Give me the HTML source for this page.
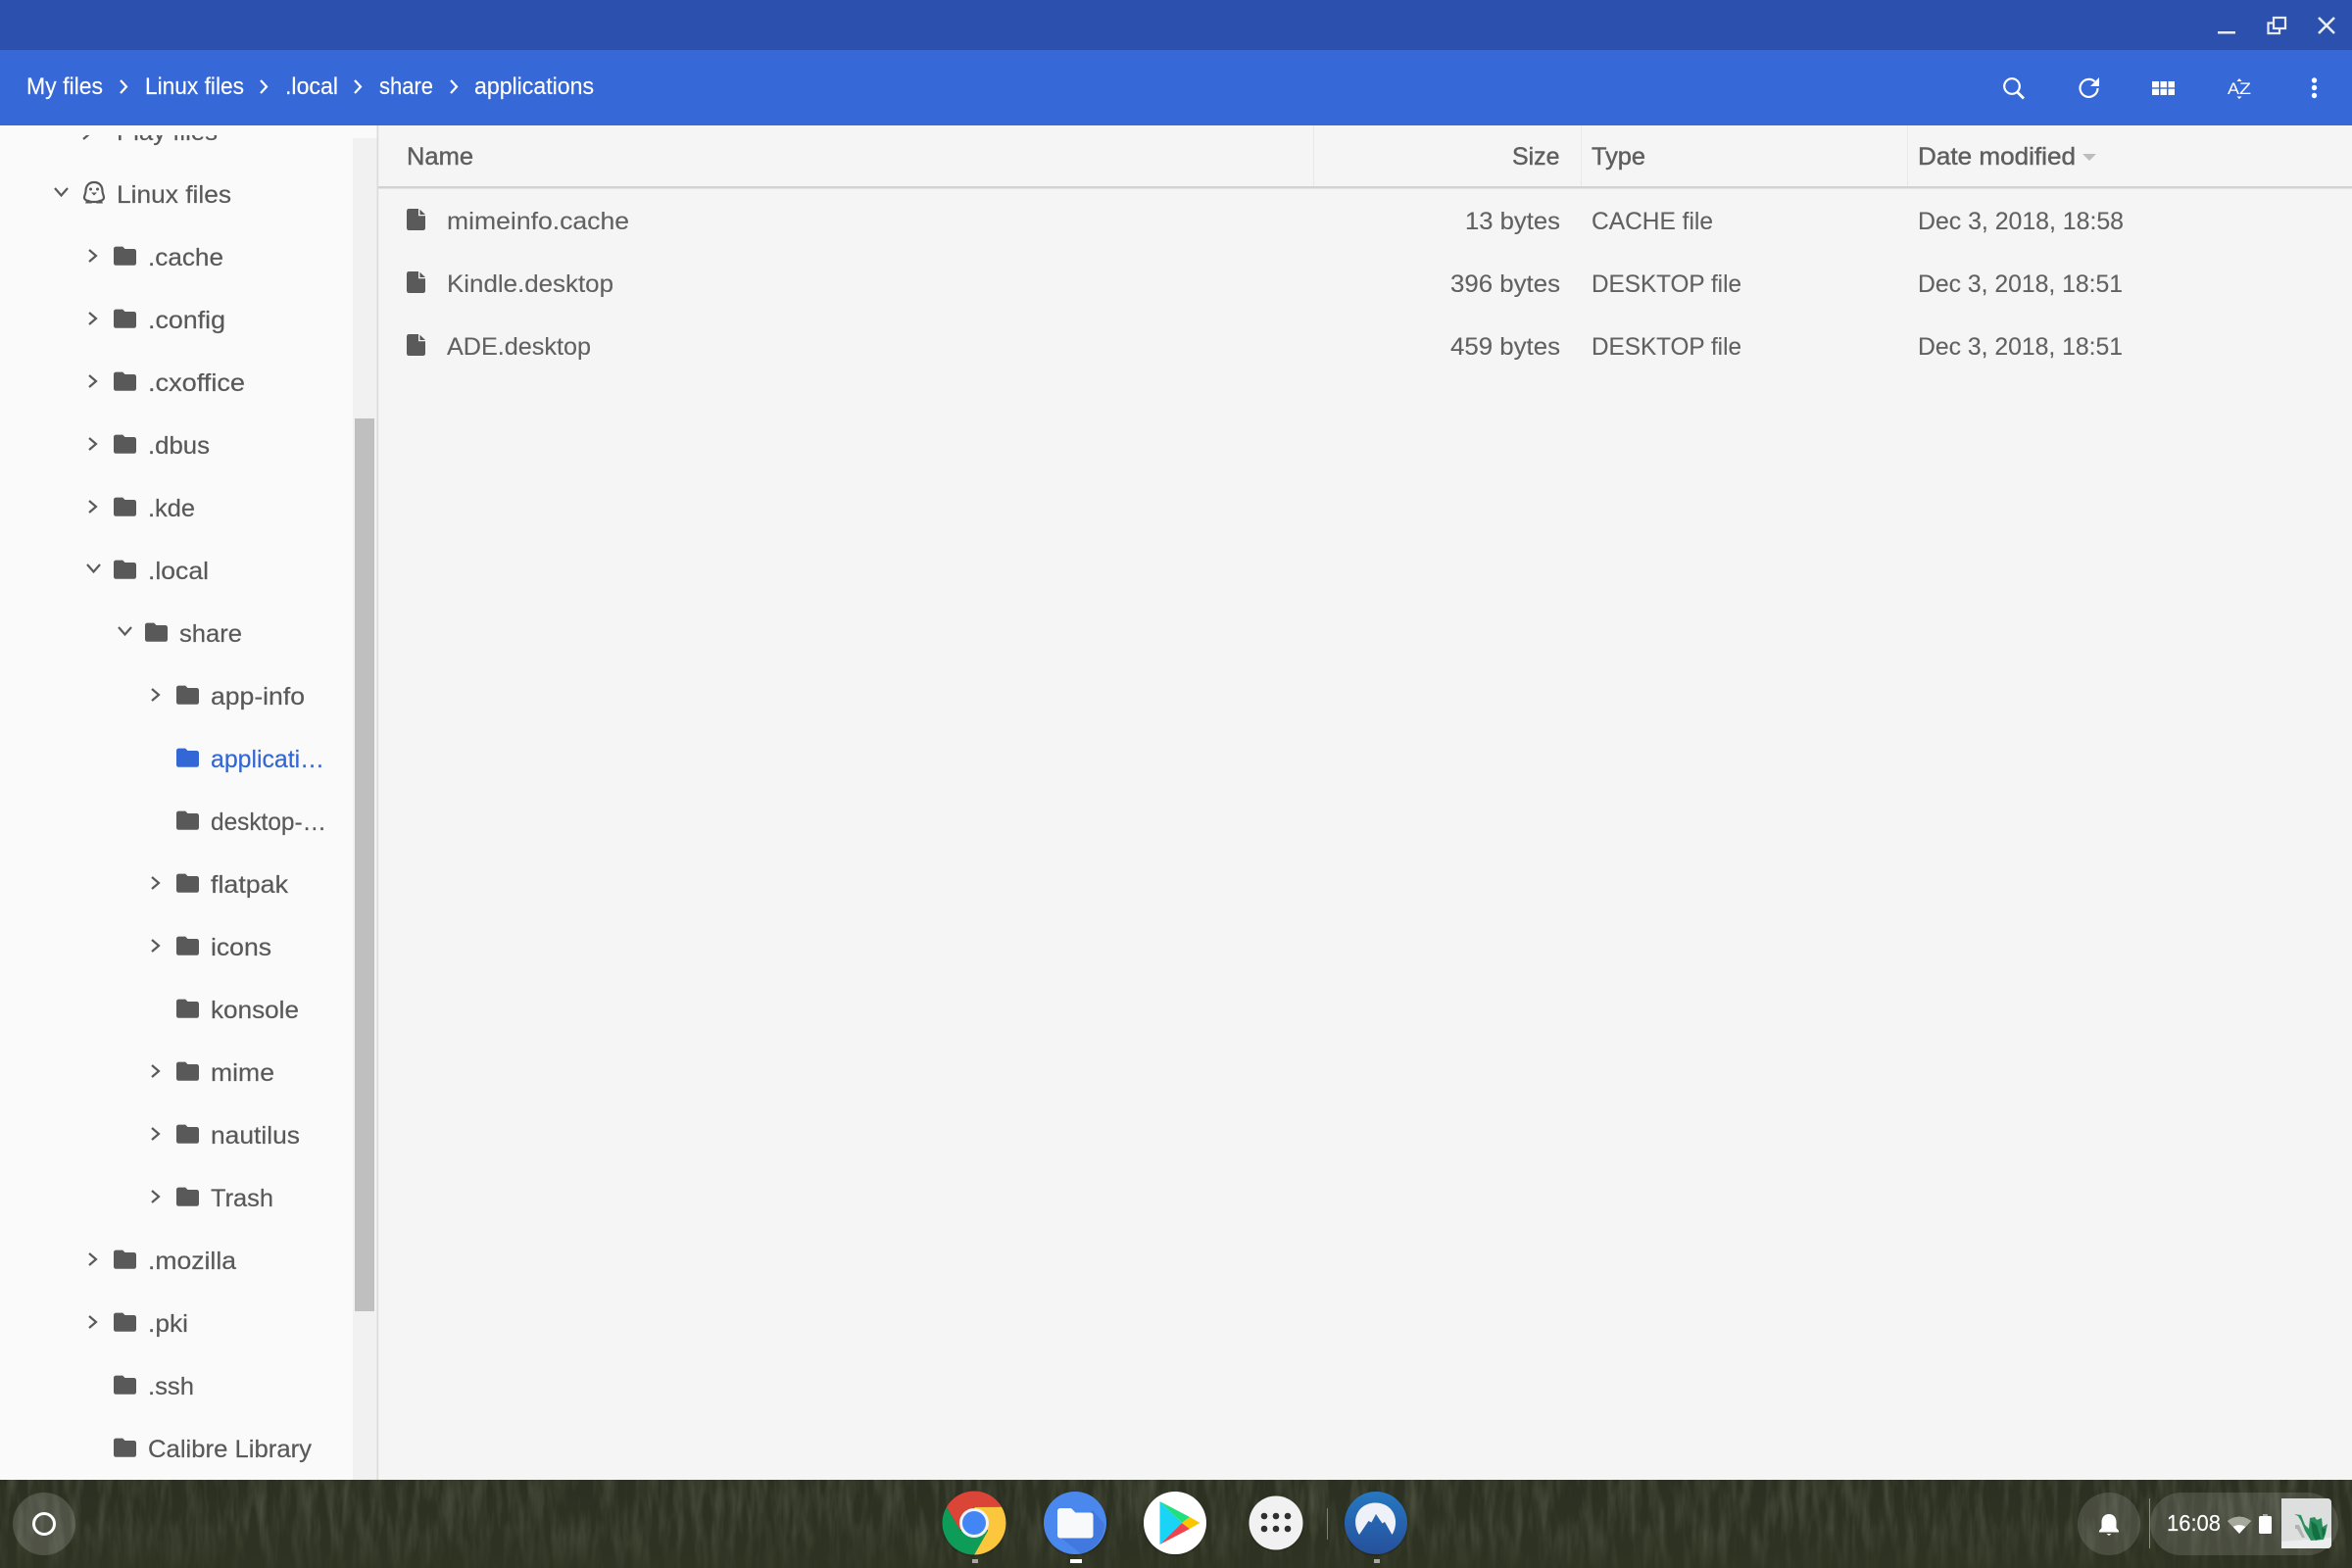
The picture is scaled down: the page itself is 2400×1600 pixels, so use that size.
<!DOCTYPE html>
<html><head><meta charset="utf-8"><title>Files</title>
<style>
html,body{margin:0;padding:0;width:2400px;height:1600px;overflow:hidden;background:#f5f5f5}
svg{display:block}
text{font-family:"Liberation Sans",sans-serif}
.b{font-size:24px;fill:#fff;stroke:#fff;stroke-width:.15}
.s{font-size:25px;fill:#595959;stroke:#595959;stroke-width:.2}
.m{font-size:25px;fill:#616161;stroke:#616161;stroke-width:.12}
.h{font-size:25px;fill:#5f5f5f;stroke:#5f5f5f;stroke-width:.45}
.c{fill:none;stroke:#5a5a5a;stroke-width:2.2}
.w{fill:none;stroke:#fff}
</style></head><body>
<svg width="2400" height="1600" viewBox="0 0 2400 1600" xmlns="http://www.w3.org/2000/svg">
<defs>
<path id="f" transform="translate(-2.3,-4.7) scale(1.15,1.2)" d="M10 4H4c-1.1 0-2 .9-2 2v12c0 1.1.9 2 2 2h16c1.1 0 2-.9 2-2V8c0-1.1-.9-2-2-2h-8l-2-2z"/>
<g id="d"><path d="M0 2.2a2.2 2.2 0 0 1 2.2-2.2H12v7.2h7V19.8a2.2 2.2 0 0 1-2.2 2.2H2.2A2.2 2.2 0 0 1 0 19.8z" fill="#5a5a5a"/><path d="M13.4 0.6L19 6H13.4z" fill="#5a5a5a"/></g>
<polyline id="r" points="0,0 7,6 0,12" class="c"/>
<polyline id="v" points="0,0 6.5,7.5 13,0" class="c"/>
<clipPath id="sb"><rect x="0" y="138" width="360" height="1372"/></clipPath>
<filter id="grass" x="0" y="0" width="100%" height="100%"><feTurbulence type="fractalNoise" baseFrequency="0.11 0.018" numOctaves="3" seed="7"/><feColorMatrix values="0 0 0 0 0.55  0 0 0 0 0.58  0 0 0 0 0.42  0.9 0 0 0 -0.34"/></filter>
<linearGradient id="shelf" x1="0" y1="0" x2="0" y2="1"><stop offset="0" stop-color="#2c3022"/><stop offset="1" stop-color="#2f3322"/></linearGradient>
<linearGradient id="fade" x1="0" y1="0" x2="0" y2="1"><stop offset="0" stop-color="#fff"/><stop offset=".55" stop-color="#fff"/><stop offset="1" stop-color="#555"/></linearGradient>
<mask id="gm"><rect y="1510" width="2400" height="90" fill="url(#fade)"/></mask>
<linearGradient id="nord" x1="0" y1="0" x2="0" y2="1"><stop offset="0" stop-color="#2877c2"/><stop offset="1" stop-color="#26509b"/></linearGradient>
<filter id="sh" x="-20%" y="-20%" width="140%" height="140%"><feDropShadow dx="0" dy="1" stdDeviation="1.2" flood-color="#000" flood-opacity=".35"/></filter>
</defs>

<rect width="2400" height="1600" fill="#f5f5f5"/>
<rect width="2400" height="51" fill="#2c50ae"/>
<rect y="51" width="2400" height="77" fill="#3768d8"/>

<!-- breadcrumbs -->
<text class="b" x="27" y="96" textLength="78" lengthAdjust="spacingAndGlyphs">My files</text>
<text class="b" x="148" y="96" textLength="101" lengthAdjust="spacingAndGlyphs">Linux files</text>
<text class="b" x="291" y="96" textLength="54" lengthAdjust="spacingAndGlyphs">.local</text>
<text class="b" x="387" y="96" textLength="55" lengthAdjust="spacingAndGlyphs">share</text>
<text class="b" x="484" y="96" textLength="122" lengthAdjust="spacingAndGlyphs">applications</text>
<g class="w" stroke-width="2.2">
<polyline points="123,82 129,88.500 123,95"/><polyline points="266,82 272,88.500 266,95"/><polyline points="362,82 368,88.500 362,95"/><polyline points="460,82 466,88.500 460,95"/>
</g>

<!-- window controls -->
<rect x="2263" y="32" width="18" height="2.500" fill="#e8ecf6"/>
<g fill="none" stroke="#e8ecf6" stroke-width="2.200">
<rect x="2320" y="18" width="12" height="11"/>
<polyline points="2320,23.500 2314.500,23.500 2314.500,34 2326,34 2326,29"/>
<path d="M2366 18L2382 34M2382 18L2366 34" stroke-width="2.600"/>
</g>

<!-- toolbar icons -->
<g class="w" stroke-width="2.200">
<circle cx="2053" cy="88" r="7.800"/><path d="M2058.500 94L2065 100.500" stroke-width="2.800"/>
<path d="M2140.500 90a9 9 0 1 1-3-6.800"/>
</g>
<path d="M2142 79v9h-9z" fill="#fff"/>
<g fill="#fff">
<rect x="2196" y="83" width="7" height="6.300"/><rect x="2204.500" y="83" width="6.500" height="6.300"/><rect x="2212.500" y="83" width="6.500" height="6.300"/>
<rect x="2196" y="90.700" width="7" height="6.300"/><rect x="2204.500" y="90.700" width="6.500" height="6.300"/><rect x="2212.500" y="90.700" width="6.500" height="6.300"/>
<circle cx="2361.500" cy="82" r="2.700"/><circle cx="2361.500" cy="89.500" r="2.700"/><circle cx="2361.500" cy="97.500" r="2.700"/>
<path d="M2285 80l-2.500 3h5zM2285 101l-2.500-2.500h5z"/>
</g>
<text x="2273" y="96" fill="#fff" style="font-size:17px" textLength="12" lengthAdjust="spacingAndGlyphs">A</text>
<text x="2285" y="96" fill="#fff" style="font-size:17px" textLength="12" lengthAdjust="spacingAndGlyphs">Z</text>

<!-- sidebar -->
<rect y="128" width="385" height="1382" fill="#fafafa"/>
<rect x="360" y="141" width="24.500" height="1369" fill="#f1f1f1"/>
<rect x="362" y="427" width="20" height="911" fill="#bfbfbf"/>
<rect x="384.500" y="128" width="1.700" height="1382" fill="#dcdcdc"/>

<g clip-path="url(#sb)">
<text class="s" x="119" y="143" textLength="103" lengthAdjust="spacingAndGlyphs">Play files</text>
<use href="#r" x="85" y="130" />
</g>
<use href="#v" x="56" y="192"/>
<g fill="none" stroke="#595959" stroke-width="2.200">
<path d="M96 186c-5.500 0-8.500 4-8.500 9 0 2.500-1.500 4.500-1.500 6.500 0 2.500 3 3.500 4.500 3.500 1 .8 3 1 5.500 1s4.500-.2 5.500-1c1.500 0 4.500-1 4.500-3.500 0-2-1.500-4-1.500-6.500 0-5-3-9-8.500-9z"/>
</g>
<g fill="#595959"><circle cx="92.500" cy="193" r="1.500"/><circle cx="99.500" cy="193" r="1.500"/><path d="M93 196.500h6l-3 3z"/><path d="M88 205h5l1 2.500h-7zM99 205h5l1 2.500h-7z"/></g>
<text class="s" x="119" y="207" textLength="117" lengthAdjust="spacingAndGlyphs">Linux files</text>

<g fill="#595959">
<use href="#f" x="116" y="251.500"/><use href="#f" x="116" y="315.500"/><use href="#f" x="116" y="379.500"/><use href="#f" x="116" y="443.500"/><use href="#f" x="116" y="507.500"/><use href="#f" x="116" y="571.500"/>
<use href="#f" x="148" y="635.500"/><use href="#f" x="180" y="699.500"/>
<use href="#f" x="180" y="827.500"/><use href="#f" x="180" y="891.500"/><use href="#f" x="180" y="955.500"/><use href="#f" x="180" y="1019.500"/><use href="#f" x="180" y="1083.500"/><use href="#f" x="180" y="1147.500"/><use href="#f" x="180" y="1211.500"/>
<use href="#f" x="116" y="1275.500"/><use href="#f" x="116" y="1339.500"/><use href="#f" x="116" y="1403.500"/><use href="#f" x="116" y="1467.500"/>
</g>
<use href="#f" x="180" y="763.500" fill="#3367d6"/>

<use href="#r" x="91" y="255"/><use href="#r" x="91" y="319"/><use href="#r" x="91" y="383"/><use href="#r" x="91" y="447"/><use href="#r" x="91" y="511"/>
<use href="#v" x="89" y="576"/><use href="#v" x="121" y="640"/>
<use href="#r" x="155" y="703"/><use href="#r" x="155" y="895"/><use href="#r" x="155" y="959"/><use href="#r" x="155" y="1087"/><use href="#r" x="155" y="1151"/><use href="#r" x="155" y="1215"/>
<use href="#r" x="91" y="1279"/><use href="#r" x="91" y="1343"/>

<text class="s" x="151" y="271" textLength="77" lengthAdjust="spacingAndGlyphs">.cache</text>
<text class="s" x="151" y="335" textLength="79" lengthAdjust="spacingAndGlyphs">.config</text>
<text class="s" x="151" y="399" textLength="99" lengthAdjust="spacingAndGlyphs">.cxoffice</text>
<text class="s" x="151" y="463" textLength="63" lengthAdjust="spacingAndGlyphs">.dbus</text>
<text class="s" x="151" y="527" textLength="48" lengthAdjust="spacingAndGlyphs">.kde</text>
<text class="s" x="151" y="591" textLength="62" lengthAdjust="spacingAndGlyphs">.local</text>
<text class="s" x="183" y="655" textLength="64" lengthAdjust="spacingAndGlyphs">share</text>
<text class="s" x="215" y="719" textLength="96" lengthAdjust="spacingAndGlyphs">app-info</text>
<text class="s" x="215" y="783" textLength="116" lengthAdjust="spacingAndGlyphs" style="fill:#3367d6;stroke:#3367d6">applicati…</text>
<text class="s" x="215" y="847" textLength="118" lengthAdjust="spacingAndGlyphs">desktop-…</text>
<text class="s" x="215" y="911" textLength="79" lengthAdjust="spacingAndGlyphs">flatpak</text>
<text class="s" x="215" y="975" textLength="62" lengthAdjust="spacingAndGlyphs">icons</text>
<text class="s" x="215" y="1039" textLength="90" lengthAdjust="spacingAndGlyphs">konsole</text>
<text class="s" x="215" y="1103" textLength="65" lengthAdjust="spacingAndGlyphs">mime</text>
<text class="s" x="215" y="1167" textLength="91" lengthAdjust="spacingAndGlyphs">nautilus</text>
<text class="s" x="215" y="1231" textLength="64" lengthAdjust="spacingAndGlyphs">Trash</text>
<text class="s" x="151" y="1295" textLength="90" lengthAdjust="spacingAndGlyphs">.mozilla</text>
<text class="s" x="151" y="1359" textLength="41" lengthAdjust="spacingAndGlyphs">.pki</text>
<text class="s" x="151" y="1423" textLength="47" lengthAdjust="spacingAndGlyphs">.ssh</text>
<text class="s" x="151" y="1487" textLength="167" lengthAdjust="spacingAndGlyphs">Calibre Library</text>

<!-- table header -->
<rect x="386" y="190" width="2014" height="2.500" fill="#d2d2d2"/>
<rect x="1340" y="128" width="1" height="62" fill="#e9e9e9"/>
<rect x="1613" y="128" width="1" height="62" fill="#e9e9e9"/>
<rect x="1946" y="128" width="1" height="62" fill="#e9e9e9"/>
<text class="h" x="415" y="168" textLength="68" lengthAdjust="spacingAndGlyphs">Name</text>
<text class="h" x="1543" y="168" textLength="48.500" lengthAdjust="spacingAndGlyphs">Size</text>
<text class="h" x="1624" y="168" textLength="55" lengthAdjust="spacingAndGlyphs">Type</text>
<text class="h" x="1957" y="168" textLength="161" lengthAdjust="spacingAndGlyphs">Date modified</text>
<path d="M2125 157h14l-7 7z" fill="#bdbdbd"/>

<!-- rows -->
<use href="#d" x="415" y="213"/><use href="#d" x="415" y="277"/><use href="#d" x="415" y="341"/>
<text class="m" x="456" y="234" textLength="186" lengthAdjust="spacingAndGlyphs">mimeinfo.cache</text>
<text class="m" x="456" y="298" textLength="170" lengthAdjust="spacingAndGlyphs">Kindle.desktop</text>
<text class="m" x="456" y="362" textLength="147" lengthAdjust="spacingAndGlyphs">ADE.desktop</text>
<text class="m" x="1495" y="234" textLength="97" lengthAdjust="spacingAndGlyphs">13 bytes</text>
<text class="m" x="1480" y="298" textLength="112" lengthAdjust="spacingAndGlyphs">396 bytes</text>
<text class="m" x="1480" y="362" textLength="112" lengthAdjust="spacingAndGlyphs">459 bytes</text>
<text class="m" x="1624" y="234" textLength="124" lengthAdjust="spacingAndGlyphs">CACHE file</text>
<text class="m" x="1624" y="298" textLength="153" lengthAdjust="spacingAndGlyphs">DESKTOP file</text>
<text class="m" x="1624" y="362" textLength="153" lengthAdjust="spacingAndGlyphs">DESKTOP file</text>
<text class="m" x="1957" y="234" textLength="210" lengthAdjust="spacingAndGlyphs">Dec 3, 2018, 18:58</text>
<text class="m" x="1957" y="298" textLength="209" lengthAdjust="spacingAndGlyphs">Dec 3, 2018, 18:51</text>
<text class="m" x="1957" y="362" textLength="209" lengthAdjust="spacingAndGlyphs">Dec 3, 2018, 18:51</text>

<!-- shelf -->
<rect y="1510" width="2400" height="90" fill="url(#shelf)"/>
<g mask="url(#gm)"><rect y="1510" width="2400" height="90" filter="url(#grass)" opacity=".4"/></g>

<circle cx="45" cy="1555" r="32" fill="#fff" fill-opacity=".16"/>
<circle cx="45" cy="1555" r="10.500" fill="none" stroke="#fff" stroke-width="3"/>

<!-- chrome -->
<g transform="translate(994,1554)" filter="url(#sh)">
<path d="M-28.100-16.300A32.500 32.500 0 0 1 28.100-16.300L0-16L-14 8Z" fill="#db4437"/>
<path d="M28.100-16.300A32.500 32.500 0 0 1 0 32.500L14 8L0-16Z" fill="#fdc73c"/>
<path d="M0 32.500A32.500 32.500 0 0 1-28.100-16.300L-14 8L14 8Z" fill="#0f9d58"/>
<circle r="15" fill="#f1f3f4"/><circle r="12" fill="#4285f4"/>
</g>
<rect x="992" y="1591" width="6" height="4" fill="#a6a79f"/>

<!-- files -->
<g filter="url(#sh)"><circle cx="1097" cy="1554" r="32" fill="#4c88ee"/></g>
<path d="M1081 1568L1115 1541L1127 1555A32 32 0 0 1 1103 1585.500Z" fill="#4279de"/>
<path d="M1082 1539h11l4.500 4.500h15c1.700 0 3 1.300 3 3v20c0 1.700-1.300 3-3 3h-30.500c-1.700 0-3-1.300-3-3v-24.500c0-1.700 1.300-3 3-3z" fill="#f8f9fb"/>
<rect x="1092" y="1591" width="12" height="4" fill="#fff"/>

<!-- play -->
<g filter="url(#sh)"><circle cx="1199" cy="1554" r="32" fill="#fff"/></g>
<path d="M1183.500 1532V1576L1206 1554Z" fill="#1ad4f7"/>
<path d="M1183.500 1532L1214 1548L1206 1554Z" fill="#1fe07c"/>
<path d="M1183.500 1576L1214 1560L1206 1554Z" fill="#ec4550"/>
<path d="M1214 1548L1224.500 1554L1214 1560L1206 1554Z" fill="#fdc400"/>

<!-- launcher -->
<g filter="url(#sh)"><circle cx="1302" cy="1554" r="27.500" fill="#f1f1f1"/></g>
<g fill="#2f2f2f"><circle cx="1290" cy="1547" r="3.300"/><circle cx="1302" cy="1547" r="3.300"/><circle cx="1314" cy="1547" r="3.300"/><circle cx="1290" cy="1560" r="3.300"/><circle cx="1302" cy="1560" r="3.300"/><circle cx="1314" cy="1560" r="3.300"/></g>
<rect x="1354" y="1539" width="1" height="32" fill="#7c7e70"/>

<!-- nord -->
<g filter="url(#sh)"><circle cx="1404" cy="1554" r="32" fill="url(#nord)"/></g>
<path d="M1387 1566C1378 1552 1385 1533.500 1403.500 1533.500C1422 1533.500 1429 1552 1420.500 1566L1413 1553L1410.500 1554.500L1404 1545L1399.500 1553.500L1396.500 1552Z" fill="#eef2f8"/>
<rect x="1402" y="1591" width="6" height="4" fill="#a6a79f"/>

<!-- status -->
<circle cx="2152" cy="1555" r="32" fill="#fff" fill-opacity=".13"/>
<path d="M2152 1545c-4.800 0-7.500 3.500-7.500 8v6l-2.500 3v1.500h20v-1.500l-2.500-3v-6c0-4.500-2.700-8-7.500-8z" fill="#fff"/>
<path d="M2149.500 1565h5l-2.500 2z" fill="#fff"/>
<rect x="2193" y="1529" width="1" height="51" fill="#8b8d7f"/>
<rect x="2194" y="1523" width="192" height="64" rx="32" fill="#fff" fill-opacity=".13"/>
<text x="2211" y="1562" fill="#fff" stroke="#fff" stroke-width=".15" style="font-size:23px" textLength="55" lengthAdjust="spacingAndGlyphs">16:08</text>
<path d="M2273 1552A19 19 0 0 1 2297 1552L2285 1565Z" fill="#fff"/>
<path d="M2273 1552A19 19 0 0 1 2297 1552L2291.500 1558A12 12 0 0 0 2278.500 1558Z" fill="#a6a89c"/>
<rect x="2309" y="1545" width="5" height="3" fill="#a6a89c"/>
<rect x="2305" y="1547" width="13" height="18" rx="1.500" fill="#fff"/>
<path d="M2328 1529H2375a4 4 0 0 1 4 4V1576a4 4 0 0 1-4 4H2328Z" fill="#dcdfde"/>
<path d="M2328 1573L2379 1569V1576a4 4 0 0 1-4 4H2328Z" fill="#eceded"/>
<path d="M2342 1556h4l6 13h-3l-5-9h-2z" fill="#aeb3b1"/>
<path d="M2341 1545L2348 1546L2352 1556L2356 1560L2357 1549L2362 1548L2364 1551L2369 1549L2370 1558L2375 1555L2373 1565L2371 1571L2358 1572L2352 1562L2348 1552L2345 1547Z" fill="#2a8f5c"/>
<path d="M2358 1552L2360 1566L2363 1572L2368 1570L2364 1556ZM2369 1559L2370 1569L2372 1566L2373 1560Z" fill="#136f43"/>
</svg>
</body></html>
